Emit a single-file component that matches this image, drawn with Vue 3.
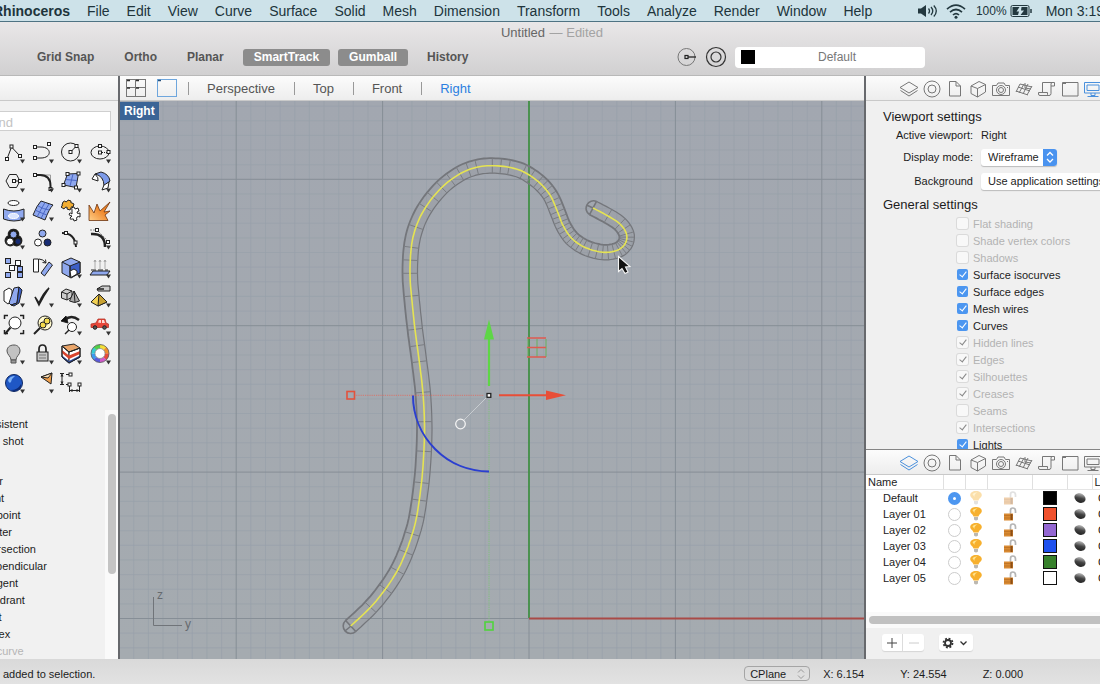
<template>
  <div class="desktop">
    <nav class="menubar" aria-label="Menu bar">
      <a v-for="m in menus" :key="m" href="#" :class="{ brand: m === 'Rhinoceros' }">{{ m }}</a>
      <div class="status-items">
        <svg width="22" height="16" viewBox="0 0 22 16" aria-hidden="true">
          <path d="M1 5.500h3L9 2v12L4 10.500H1z" fill="#23383f" />
          <path d="M11.500 5.500q2 2.500 0 5M14 4q3.500 4 0 8M16.800 2.500q5 5.500 0 11" fill="none" stroke="#23383f" stroke-width="1.300" />
        </svg>
        <svg class="wifi" width="20" height="16" viewBox="0 0 20 16" aria-hidden="true">
          <path d="M1 6.200q9-8 18 0M4 9.200q6-5.400 12 0M7 12q3-2.800 6 0" fill="none" stroke="#23383f" stroke-width="1.700" />
          <circle cx="10" cy="14.200" r="1.500" fill="#23383f" />
        </svg>
        <span class="percent">100%</span>
        <svg width="23" height="14" viewBox="0 0 23 14" aria-hidden="true">
          <rect x="1" y="1.500" width="18" height="11" rx="1.500" fill="none" stroke="#23383f" />
          <path d="M2.500 3h7l-3 4.500h2.500L8 11H2.500zM11.500 3h6v8h-7l3.500-4.500h-3z" fill="#23383f" />
          <path d="M21 5v4" stroke="#23383f" stroke-width="1.500" />
        </svg>
        <span class="clock">Mon 3:19</span>
      </div>
    </nav>

    <header class="titlebar">
      <h1>Untitled <span>— Edited</span></h1>
      <div class="toolbar">
        <button v-for="t in toggles" :key="t.name" type="button" :aria-pressed="t.on" @click="t.on = !t.on">
          {{ t.name }}
        </button>
        <div class="current-layer">
          <button type="button" class="round" aria-label="Record history">
            <svg width="20" height="20" viewBox="0 0 20 20">
              <circle cx="9.500" cy="10" r="8.500" fill="none" stroke="#777" />
              <path d="M11 10h8" stroke="#222" stroke-width="1.300" />
              <rect x="8" y="8.500" width="3" height="3" fill="none" stroke="#222" stroke-width="1.200" />
            </svg>
          </button>
          <button type="button" class="round" aria-label="Properties">
            <svg width="22" height="22" viewBox="0 0 22 22" fill="none" stroke="#333" stroke-width="1.200">
              <circle cx="11" cy="11" r="9.500" />
              <circle cx="11" cy="11" r="5" />
            </svg>
          </button>
          <button type="button" class="layer-button"><i></i><span>Default</span></button>
        </div>
      </div>
    </header>

    <main class="workspace">
      <aside class="sidebar">
        <div class="strip"></div>
        <div class="command">
          <input type="text" placeholder="Command" aria-label="Command" />
        </div>
        <div class="tools">
          <button v-for="(t, i) in tools" :key="i" type="button" :aria-label="t.name">
            <svg width="28" height="28" viewBox="0 0 28 28" fill="none" stroke="#222">
              <g v-html="t.art"></g>
              <path v-if="!t.single" d="M20 20.500h5l-2.500 4z" fill="#333" stroke="none" />
            </svg>
          </button>
        </div>
        <div class="snaps">
          <ul>
            <li v-for="s in snaps" :key="s" :class="{ last: s === 'One shot', off: s === 'On curve' }">{{ s }}</li>
          </ul>
          <div class="vscroll"><i></i></div>
        </div>
      </aside>

      <section class="center">
        <div class="strip tabs">
          <button type="button" aria-label="Four viewports">
            <svg width="20" height="18" viewBox="0 0 20 18" fill="none" stroke="#777">
              <rect x="0.500" y="0.500" width="19" height="17" />
              <path d="M9.500 0v18M0 8.500h20" />
              <path d="M1 1.500h3M10 1.500h3M1 9h3M10 9h3" stroke="#333" stroke-width="1.300" />
            </svg>
          </button>
          <button type="button" class="single" aria-label="Single viewport">
            <svg width="20" height="18" viewBox="0 0 20 18" fill="none" stroke="#6ea6dd">
              <rect x="0.500" y="0.500" width="19" height="17" />
              <path d="M1 1.500h3" stroke="#26517c" stroke-width="1.500" />
            </svg>
          </button>
          <button v-for="v in views" :key="v" type="button" class="view" :class="{ active: v === view }" @click="view = v">
            {{ v }}
          </button>
        </div>

        <div class="viewport">
          <svg viewBox="120 101 744 558" preserveAspectRatio="xMinYMin slice" fill="none">
            <defs>
              <linearGradient id="floor" x1="0" y1="0" x2="0" y2="1">
                <stop offset="0" stop-color="#a2a7b0" />
                <stop offset="1" stop-color="#a5abb0" />
              </linearGradient>
            </defs>
            <rect x="120" y="101" width="744" height="558" fill="url(#floor)" />
            <path :d="minorGrid" stroke="#98a0aa" stroke-width="0.700" />
            <path :d="majorGrid" stroke="#868e96" />

            <path d="M529 101V618" stroke="#439147" stroke-width="1.800" />
            <path d="M529 618.500H864" stroke="#a94a47" stroke-width="1.800" />

            <g stroke="#74767b">
              <path :d="pipe.fill" fill="#8a8d91" fill-opacity="0.200" stroke="none" />
              <path :d="pipe.left" stroke-width="1.200" />
              <path :d="pipe.right" stroke-width="1.800" />
              <path :d="pipe.rings" stroke="#7b7e83" />
              <path :d="pipe.caps" stroke-width="1.600" />
            </g>
            <path :d="pipe.middle" stroke="#e5e352" stroke-width="1.600" />

            <path d="M354 395.300H484" stroke="#dd6f65" stroke-width="0.900" stroke-dasharray="1.200 1" />
            <path d="M489 400V621" stroke="#7dc478" stroke-width="0.900" stroke-dasharray="1.200 1" />
            <path d="M487 397L464 420" stroke="#d2d5d8" stroke-width="0.800" />
            <circle cx="460.500" cy="424" r="4.800" stroke="#f3f3f3" stroke-width="1.300" />
            <path d="M413 395.500A76 76 0 0 0 489 471.500" stroke="#2b3fd0" stroke-width="2" />
            <rect x="347" y="391.500" width="7.500" height="7.500" stroke="#e3523c" stroke-width="1.600" />
            <rect x="485" y="622" width="8" height="8" stroke="#50d43d" stroke-width="1.600" />
            <path d="M499 395.300H548" stroke="#e84e37" stroke-width="2" />
            <path d="M546 390.500L566 395.300L546 400z" fill="#e84e37" />
            <path d="M489 386V338" stroke="#5ed646" stroke-width="2.200" />
            <path d="M484 339.500L489 319.500L494 339.500z" fill="#5ed646" />
            <rect x="487" y="393.500" width="3.800" height="3.800" fill="#fff" stroke="#222" stroke-width="1.300" />
            <path d="M528 339V357M537 339V357M546 339V357" stroke="#66b05d" />
            <path d="M527 338H546M527 347.500H546M527 357H546" stroke="#e05a4f" stroke-width="1.300" />

            <path d="M153.500 597V625.500H182" stroke="#707479" />
            <text x="157" y="599">z</text>
            <text x="185" y="628">y</text>

            <path d="M618.500 256.500V271.500L622 268.500L625 273.500L628 272L625.500 267L630 266.500z" fill="#111" stroke="#f5f5f5" stroke-width="1.100" />
          </svg>
          <span class="view-label">{{ view }}</span>
        </div>
      </section>

      <aside class="inspector">
        <div class="strip panel-tabs">
          <button v-for="(p, i) in panels" :key="p.name" type="button" :aria-label="p.name" :class="{ active: i === 8 }">
            <svg width="20" height="20" viewBox="0 0 20 20" fill="none" stroke="currentColor"><path :d="p.d" /></svg>
          </button>
        </div>
        <div class="settings">
          <h2>Viewport settings</h2>
          <div class="field"><span>Active viewport:</span><b>{{ view }}</b></div>
          <div class="field mode">
            <label for="mode">Display mode:</label>
            <div class="popup">
              <select id="mode"><option>Wireframe</option></select>
              <svg width="14" height="17" viewBox="0 0 14 17" fill="none" stroke="#fff" stroke-width="1.300">
                <path d="M4 6.500L7 3.500L10 6.500M4 10L7 13L10 10" />
              </svg>
            </div>
          </div>
          <div class="field mode">
            <label for="background">Background</label>
            <div class="popup wide">
              <select id="background"><option>Use application settings</option></select>
            </div>
          </div>
          <h2 class="general">General settings</h2>
          <label v-for="o in options" :key="o.name" class="option" :class="{ disabled: o.disabled }">
            <input v-model="o.on" type="checkbox" :disabled="o.disabled" />{{ o.name }}
          </label>
        </div>

        <div class="layers">
          <div class="strip panel-tabs">
            <button v-for="(p, i) in panels" :key="p.name" type="button" :aria-label="p.name" :class="{ active: i === 0 }">
              <svg width="20" height="20" viewBox="0 0 20 20" fill="none" stroke="currentColor"><path :d="p.d" /></svg>
            </button>
          </div>
          <div class="layer-list">
            <table>
              <colgroup>
                <col class="c-name" /><col class="c-radio" /><col class="c-bulb" /><col class="c-lock" />
                <col class="c-color" /><col class="c-ball" /><col />
              </colgroup>
              <thead>
                <tr><th>Name</th><th></th><th></th><th></th><th></th><th></th><th>L</th></tr>
              </thead>
              <tbody>
                <tr v-for="(l, i) in layers" :key="l.name">
                  <td class="name">{{ l.name }}</td>
                  <td><input v-model="current" type="radio" name="layer" :value="l.name" :aria-label="l.name" /></td>
                  <td>
                    <svg :class="{ faint: i === 0 }" width="14" height="16" viewBox="0 0 14 16">
                      <path d="M7 1C3.500 1 1.200 2.800 1.200 5C1.200 7.500 4 8 4.500 10.500H9.500C10 8 12.800 7.500 12.800 5C12.800 2.800 10.500 1 7 1z" fill="#f7b02e" />
                      <path d="M3.500 4.200Q5 2 8.500 2.500Q5 4 5.500 7Z" fill="#ffe38d" />
                      <path d="M5 11h4v2.500q-2 2-4 0z" fill="#bcb8b0" />
                    </svg>
                  </td>
                  <td>
                    <svg :class="{ faint: i === 0 }" width="16" height="16" viewBox="0 0 16 16">
                      <path d="M8.500 9V4.500Q8.500 2 10.800 2Q13.500 2 13.500 5V7" fill="none" stroke="#b5b5b5" stroke-width="1.700" />
                      <rect x="2" y="7.500" width="9" height="7" fill="#d98a32" />
                      <path d="M2 9.500h9M2 12h9" stroke="#b86d22" stroke-width="0.700" />
                      <path d="M9.500 8v6" stroke="#8d4f16" stroke-width="2" />
                    </svg>
                  </td>
                  <td>
                    <svg width="14" height="14" viewBox="0 0 14 14">
                      <rect x="0.500" y="0.500" width="13" height="13" :fill="l.color" stroke="#111" />
                    </svg>
                  </td>
                  <td>
                    <svg width="12" height="14" viewBox="0 0 12 14">
                      <defs>
                        <linearGradient :id="'ball' + i" x1="0.200" y1="0" x2="0.600" y2="1">
                          <stop offset="0" stop-color="#ccc" />
                          <stop offset="0.550" stop-color="#444" />
                          <stop offset="1" stop-color="#222" />
                        </linearGradient>
                      </defs>
                      <ellipse cx="6" cy="7" rx="5.800" ry="4.600" :fill="`url(#ball${i})`" transform="rotate(30 6 7)" />
                    </svg>
                  </td>
                  <td class="line">Continuous</td>
                </tr>
              </tbody>
            </table>
          </div>
          <div class="hscroll"><i></i></div>
          <div class="layer-actions">
            <div class="group">
              <button type="button" aria-label="Add layer">
                <svg width="12" height="12" viewBox="0 0 12 12"><path d="M1 6h10M6 1v10" stroke="#444" /></svg>
              </button>
              <button type="button" aria-label="Remove layer" disabled>
                <svg width="12" height="12" viewBox="0 0 12 12"><path d="M1 6h10" stroke="#ccc" /></svg>
              </button>
            </div>
            <button type="button" class="gear" aria-label="Layer actions">
              <svg width="28" height="12" viewBox="0 0 28 12" fill="none" stroke="#333">
                <circle cx="6" cy="6" r="3" stroke-width="1.800" />
                <circle cx="6" cy="6" r="4.500" stroke-width="1.800" stroke-dasharray="1.900 1.634" />
                <path d="M18.500 4.500L21.500 7.500L24.500 4.500" stroke-width="1.300" />
              </svg>
            </button>
          </div>
        </div>
      </aside>
    </main>

    <footer class="statusbar">
      <span class="message">added to selection.</span>
      <div class="coords">
        <div class="plane">
          <select aria-label="Coordinate system"><option>CPlane</option></select>
          <svg width="10" height="12" viewBox="0 0 10 12" fill="none" stroke="#999">
            <path d="M2 4.500L5 1.500L8 4.500M2 7.500L5 10.500L8 7.500" />
          </svg>
        </div>
        <span>X: 6.154</span><span>Y: 24.554</span><span>Z: 0.000</span>
      </div>
    </footer>
  </div>
</template>

<script setup>
import { ref, reactive } from 'vue'

const menus = ['Rhinoceros', 'File', 'Edit', 'View', 'Curve', 'Surface', 'Solid', 'Mesh', 'Dimension', 'Transform', 'Tools', 'Analyze', 'Render', 'Window', 'Help']

const toggles = reactive([
  { name: 'Grid Snap', on: false },
  { name: 'Ortho', on: false },
  { name: 'Planar', on: false },
  { name: 'SmartTrack', on: true },
  { name: 'Gumball', on: true },
  { name: 'History', on: false },
])

const views = ['Perspective', 'Top', 'Front', 'Right']
const view = ref('Right')

const snaps = ['Persistent', 'One shot', 'End', 'Near', 'Point', 'Midpoint', 'Center', 'Intersection', 'Perpendicular', 'Tangent', 'Quadrant', 'Knot', 'Vertex', 'On curve']

const options = reactive([
  { name: 'Flat shading', on: false, disabled: true },
  { name: 'Shade vertex colors', on: false, disabled: true },
  { name: 'Shadows', on: false, disabled: true },
  { name: 'Surface isocurves', on: true },
  { name: 'Surface edges', on: true },
  { name: 'Mesh wires', on: true },
  { name: 'Curves', on: true },
  { name: 'Hidden lines', on: true, disabled: true },
  { name: 'Edges', on: true, disabled: true },
  { name: 'Silhouettes', on: true, disabled: true },
  { name: 'Creases', on: true, disabled: true },
  { name: 'Seams', on: false, disabled: true },
  { name: 'Intersections', on: true, disabled: true },
  { name: 'Lights', on: true },
])

const current = ref('Default')
const layers = [
  { name: 'Default', color: '#000' },
  { name: 'Layer 01', color: '#f0512d' },
  { name: 'Layer 02', color: '#9467d2' },
  { name: 'Layer 03', color: '#1f51ee' },
  { name: 'Layer 04', color: '#37812b' },
  { name: 'Layer 05', color: '#fff' },
]

const panels = [
  { name: 'Layers', d: 'M1 8.500L10 3L19 8.500L10 14zM1.500 11.500L10 17L18.500 11.500' },
  { name: 'Properties', d: 'M2 10a8 8 0 1 0 16 0a8 8 0 1 0-16 0M6 10a4 4 0 1 0 8 0a4 4 0 1 0-8 0' },
  { name: 'Notes', d: 'M4.500 2.500H11L15.500 7V17H4.500zM11 2.500V7H15.500' },
  { name: 'Box', d: 'M3 7L11 2.500L17.500 5.500V13L9.500 18L3 14.500zM3 7L9.500 9.500V18M9.500 9.500L17.500 5.500' },
  { name: 'Camera', d: 'M1.500 6.500H5.500L7 4H13L14.500 6.500H18.500V16.500H1.500zM5.500 11a4.500 4.500 0 1 0 9 0a4.500 4.500 0 1 0-9 0M7.500 11a2.500 2.500 0 1 0 5 0a2.500 2.500 0 1 0-5 0M16 8.500h1' },
  { name: 'Grid', d: 'M6 5L18 8M4 8L16 12M2 12L14 16M6 5L2 13M10 5L5 14M14 5L9 15M18 7L13 16M11 4V9L17 10' },
  { name: 'Script', d: 'M5.500 14V3.500H17.500V7H14V14.500Q14 16.500 12 16.500H3Q1.500 16.500 1.500 15V13.500H10.500V15.500Q11 17 12.500 16.500M14 7V5Q14 3.500 15.500 3.500' },
  { name: 'Viewports', d: 'M2.500 3.500H18V17H2.500zM3 4.500H6' },
  { name: 'Display', d: 'M1.500 3.500H18.500V14H1.500zM4 6H16V11.500H4zM8 14V16.500H12V14M4.500 17.500H15.500' },
]

const sq = (x, y) => `<rect x="${x - 1.5}" y="${y - 1.5}" width="3" height="3" fill="#fff" stroke="#222"/>`
const box = (x, y, s, fill) => `<rect x="${x}" y="${y}" width="${s}" height="${s}" fill="${fill}"/>`

const tools = [
  { name: 'Polyline', art: '<path d="M7 20L11.500 8L20 17"/>' + sq(7, 20) + sq(11.5, 7.5) + sq(20, 17) },
  { name: 'Curve', art: '<path d="M6 8H12C23 8 23 19 12 19H6"/>' + sq(6, 8) + sq(6, 19) + sq(20, 5) },
  { name: 'Circle', art: '<circle cx="13.500" cy="13" r="9"/><path d="M13.500 13L19 7.500"/>' + sq(13.5, 13) + sq(19.5, 7) },
  { name: 'Ellipse', art: '<ellipse cx="14" cy="13.500" rx="9" ry="6.500"/><path d="M14 13.500H22" stroke-dasharray="1 1"/>' + sq(14, 13.5) + sq(14, 7) + sq(22.5, 13) },
  { name: 'Polygon', art: '<path d="M6 13L9.500 6.500H16.500L20 13L16.500 19.500H9.500z"/><path d="M14 13h6"/>' + sq(14, 13) + sq(20, 13) },
  { name: 'Fillet curves', art: '<path d="M6 7H21.500V22" stroke="#999"/><path d="M6 7H11Q21.500 7 21.500 18V21" stroke-width="2"/>' + sq(6, 7) + sq(21.5, 21) },
  { name: 'Surface from points', art: '<path d="M10.500 6L21.500 5.500L19 19.500L6.500 17z" fill="#8fa8ee"/><path d="M16 6L13 18M8.500 11.500L20 12.500" stroke="#4a66c4"/>' + sq(10.5, 6) + sq(21.5, 5.5) + sq(19, 19.5) + sq(6.5, 17) },
  { name: 'Loft', art: '<path d="M9 6Q18 8 18 18L24 13Q23 6 15 4z" fill="#7d9bea"/><path d="M9 6L6 11L12 13Q13 10 9 6zM18 17L23 14L22 20L16 22z" fill="#fff"/>' },
  { name: 'Revolve', art: '<ellipse cx="13.500" cy="6" rx="5.500" ry="2.500" fill="#fff"/><path d="M3.500 12Q14 16 24 12V22Q14 26 3.500 22z" fill="#8fa8ee"/><ellipse cx="13.500" cy="19" rx="5" ry="2.500" fill="#dbe5ff" stroke="#fff"/>' },
  { name: 'Surface from network', art: '<path d="M12 4L24 8Q20 12 16 23L4 18Q8 8 12 4z" fill="#8fa8ee"/><path d="M16 5.500Q12 12 8 20M20 7Q16 13 12 21.500M9 9Q14 12 20 13M6 13Q12 16 18 18" stroke="#4a66c4"/>' },
  { name: 'Join', single: true, art: '<path d="M6 5q2-2 3 0q2-1 2-2l3 1q-1 2 1 2l2 1-1 3q-2-1-2 1l-1 2-3-1q1-2-1-2q-2 1-2 2l-3-2q2-1 1-2z" fill="#f2ae32"/><path d="M15 13q-1-2 1-3q2 0 2 2l3-1 1 3q-2 0-2 2q1 1 3 0l0 4q-2-1-3 0q-1 2 0 3l-3 1q0-3-2-2q-2 1-2-1l2-2q-3 0-3-2q1-2 3 0z" fill="#fff"/>' },
  { name: 'Explode', single: true, art: '<defs><linearGradient id="burst" x1="0" y1="1" x2="1" y2="0"><stop offset="0" stop-color="#ffd089"/><stop offset=".6" stop-color="#ee8427"/></linearGradient></defs><path d="M3 23.500V8L8 16L11 7L14 14L24 5L18 15L24 14L19 18L22 23.500z" fill="url(#burst)" stroke="#6b3411" stroke-width="0.800"/>' },
  { name: 'Boolean union', art: '<path d="M13.500 4.500a5 5 0 0 1 5 6.500a5 5 0 1 1-5 8.500a5 5 0 1 1-5-8.500a5 5 0 0 1 5-6.500z" fill="#111" stroke-width="1.500"/><circle cx="13.500" cy="9.500" r="3.500" fill="#8fa8ee"/><circle cx="10" cy="16.500" r="3.500" fill="#fff"/><circle cx="18" cy="16.500" r="3" fill="#172c74"/>' },
  { name: 'Group', single: true, art: '<circle cx="13.500" cy="8.500" r="3.500" fill="#8fa8ee"/><circle cx="9" cy="17.500" r="3.500" fill="#fff"/><circle cx="18.500" cy="17.500" r="3.500" fill="#172c74"/>' },
  { name: 'Edit points', single: true, art: '<path d="M5 8Q18 8 19 22" stroke-width="2"/>' + sq(9, 8) + sq(18.5, 17.5) },
  { name: 'Control points', art: '<path d="M5 9Q19 8 19 22" stroke-width="2.500"/><path d="M4 5H11L21 15" stroke="#888" stroke-dasharray="2 1"/>' + sq(11, 5) + sq(22, 17) },
  { name: 'Array', single: true, art: box(5.5, 4.5, 5, '#8fa8ee') + box(15.5, 6.5, 5, '#fff') + box(9.5, 11.5, 5, '#fff') + box(5.5, 18.5, 5, '#8fa8ee') + box(17.5, 12.5, 5, '#8fa8ee') + box(17.5, 18.5, 5, '#8fa8ee') },
  { name: 'Orient', single: true, art: '<path d="M4.500 5H9.500V18H4.500z" fill="#fff"/><path d="M12 19L20 8L23.500 11L15.500 22z" fill="#8fa8ee"/><path d="M10 5Q14 5 17 9M17 9l-3.500-.5M17 9l-.5-3.500"/>' },
  { name: 'Box', art: '<path d="M5 8L14 4L23 8V19L14 24L5 19z" fill="#8fa8ee"/><path d="M13 12L23 8V19L13 23z" fill="#3d5fc6"/><path d="M5 8L13 12V23"/><path d="M13 17L17 15L20 17V20L14 23.500z" fill="#fff"/>' },
  { name: 'Extrude', art: '<path d="M7 17H24L21 21H4z" fill="#8fa8ee"/><path d="M9 15V8M14 15V8M19 15V8" stroke="#aaa"/><path d="M8 8L9 6L10 8M13 8L14 6L15 8M18 8L19 6L20 8" stroke="#999"/><path d="M5 16H22" stroke-dasharray="5 2"/>' },
  { name: 'Unroll', art: '<path d="M4 8L9 5L12 7V18L8 21L4 18z" fill="#fff"/><path d="M14 5L19 4L17 20L11 22L9 20z" fill="#8fa8ee"/><path d="M19 4L22 7L19 20L14 23L11 22L17 20z" fill="#3d5fc6"/>' },
  { name: 'Check', art: '<path d="M6 14L10 20Q14 10 20 5Q15 12 10 22z" fill="#111" stroke-width="1.500"/>' },
  { name: 'Solids', art: '<path d="M4.500 9L9 6L15 8V14L10 17L4.500 15z" fill="#ccc"/><path d="M4.500 9L10 11L15 8M10 11V17"/><path d="M17 8L22.500 18Q18 21 12.500 18z" fill="#aaa"/><path d="M17 8L18 19.500"/>' },
  { name: 'Extract', art: '<path d="M13 11L21 19L12 23L5 19z" fill="#f2d154"/><path d="M13 11L12 23L21 19z" fill="#c9a232"/><path d="M11 6L16 3H24V8H18L12 8z" fill="#ccc"/><path d="M11 6h7" stroke-width="1.500"/>' },
  { name: 'Zoom extents', single: true, art: '<circle cx="15" cy="12" r="6" fill="#fff"/><path d="M10.500 16.500L5 23" stroke-width="2"/><path d="M4.500 8V4.500H8M20 4.500H23.500V8M23.500 19V22.500H20M4.500 19V22.500H8" stroke-width="1.500"/>' },
  { name: 'Zoom selected', single: true, art: '<circle cx="16" cy="12" r="7" fill="#fff9cc"/><circle cx="14" cy="14" r="3" fill="#f4dc4d"/><circle cx="18" cy="10" r="3" fill="#f4dc4d"/><path d="M11 17L5 23" stroke-width="2"/>' },
  { name: 'Undo view change', art: '<path d="M22 9Q14 3 8 9" stroke-width="2.500"/><path d="M4 10L9 5L11 12z" fill="#111"/><circle cx="15" cy="16" r="4.500" fill="#fff"/><path d="M12 19L8 23" stroke-width="1.500"/>' },
  { name: 'Move', art: '<path d="M5 13L10 12L12 8H19L20 12L22.500 13V16.500H5z" fill="#e8483a" stroke="#b5352a" stroke-width=".8"/><path d="M12 11.500L13 9H15V12zM16 9H18L19 12H16z" fill="#ffd9d4" stroke="none"/><circle cx="9" cy="16.500" r="1.800" fill="#555"/><circle cx="18.500" cy="16.500" r="1.800" fill="#555"/>' },
  { name: 'Hide', art: '<path d="M14 5C9 5 7 8 7 11C7 15 11 16 11 20H16C16 16 20 15 20 11C20 8 18 5 14 5z" fill="#c2c2c2" stroke="#555"/><path d="M11 20h5v3h-5z" fill="#999" stroke="#555"/>' },
  { name: 'Lock', art: '<path d="M10 13V9Q10 5 13.500 5Q17 5 17 9V13" stroke-width="1.700"/><rect x="8" y="12" width="11" height="9" fill="#c8c8c8"/><path d="M10 15h7M10 18h7" stroke="#777"/>' },
  { name: 'Layers', art: '<path d="M5 6L12 12V23L5 17z" fill="#fff"/><path d="M12 12L23 8V17L12 23z" fill="#fff"/><path d="M5 6L17 4L23 8L12 12z" fill="#e9a56a"/><path d="M5 10L12 15.500L23 11V14L12 19L5 13z" fill="#d9442f" stroke="none"/><path d="M5 15.500L12 21L23 15.500V17.500L12 23.500L5 17.500z" fill="#2b4690" stroke="none"/><path d="M5 6L12 12L23 8V17L12 23L5 17z"/>' },
  {
    name: 'Color wheel',
    art: ['#f6df36', '#f08d2d', '#e84b3c', '#d05cc9', '#5b58dc', '#3b9af0', '#35cbd4', '#52cf47']
      .map((c, i) => `<path d="M14 6.500A7 7 0 0 1 19.100 8.600" stroke="${c}" stroke-width="4" transform="rotate(${i * 45} 14 13.500)"/>`)
      .join('') + '<circle cx="14" cy="13.500" r="9" stroke="#555" stroke-width=".8"/><circle cx="14" cy="13.500" r="5" fill="#fff" stroke="#777" stroke-width=".7"/>',
  },
  { name: 'Render', art: '<circle cx="14" cy="14" r="8.500" fill="#1f57c5" stroke="#0e2760"/><path d="M8 11Q10 7 15 7Q12 9 11 13Q9 15 8 11z" fill="#7db2f8" stroke="none"/><path d="M11 21Q18 21 21 15Q22 22 14 22z" fill="#0d2a75" stroke="none"/>' },
  { name: 'Camera', art: '<path d="M12 8L23 4L22 15z" fill="#f0a04c"/><path d="M12 8L23 4L19 9z" fill="#ffe2b8"/>' },
  { name: 'Dimension', single: true, art: '<path d="M5 5V15M3 4.500H7M3 15.500H7M9 5.500H13M12.500 23V15M22.500 23V15M9 15.500H11M13 21.500H22"/><path d="M5 4.500l-1.500 3h3zM5 15.500l-1.500-3h3zM12.500 21.500l3-1.500v3zM22.500 21.500l-3-1.500v3z" fill="#222" stroke="none"/>' + sq(13.5, 5.5) + sq(12.5, 15.5) + sq(22.5, 15.5) },
]

// construction plane grid: origin on the world axes, major line every 10 units
const origin = { x: 529, y: 618.5 }
const step = 14.64
const gridPath = (major) => {
  let d = ''
  for (let i = -28; i <= 22; i++) {
    if ((i % 10 === 0) === major) d += `M${(origin.x + i * step).toFixed(1)} 101V659`
  }
  for (let j = -35; j <= 2; j++) {
    if ((j % 10 === 0) === major) d += `M120 ${(origin.y + j * step).toFixed(1)}H864`
  }
  return d
}
const minorGrid = gridPath(false)
const majorGrid = gridPath(true)

// rail curve: x, y, number of isocurves up to the next point
const rail = [
  [593, 208, 1], [608, 216, 1], [620, 224, 2], [626.5, 234, 3], [625.5, 243, 3], [619, 249.5, 2],
  [608, 252.3, 2], [597, 251.3, 2], [583.5, 246.7, 3], [571.7, 238.3, 3], [563.3, 226, 3],
  [557.5, 211.7, 3], [550, 195, 3], [538.3, 181.7, 2], [523.3, 171.7, 1], [509, 167.3, 2],
  [492.3, 165.7, 1], [476.7, 167.3, 2], [460, 173.8, 2], [441.7, 187.500, 2], [425.5, 207.5, 1],
  [416, 227, 1], [411.300, 247.3, 2], [410, 273.3, 1], [411.5, 296, 1], [415, 329.3, 2],
  [419.3, 361.7, 1], [422.9, 392.3, 1], [424.4, 421.7, 1], [423.9, 451.3, 1], [421.5, 482.7, 2],
  [416.8, 516, 1], [412.2, 534, 1], [405.8, 552.3, 1], [397.3, 570.7, 1], [385.5, 589, 1],
  [370.5, 607.3, 0], [350.7, 626, 0],
]
const radius = 7.5

const buildPipe = () => {
  const mid = []
  const left = []
  const right = []
  let rings = ''
  const at = (s, t) => {
    const p = [s - 1, s, s + 1, s + 2].map((k) => rail[Math.max(0, Math.min(rail.length - 1, k))])
    const axis = (a) => {
      const [p0, p1, p2, p3] = p.map((q) => q[a])
      const c1 = p2 - p0
      const c2 = 2 * p0 - 5 * p1 + 4 * p2 - p3
      const c3 = 3 * p1 - p0 - 3 * p2 + p3
      return [(2 * p1 + c1 * t + c2 * t * t + c3 * t * t * t) / 2, (c1 + 2 * c2 * t + 3 * c3 * t * t) / 2]
    }
    const [x, dx] = axis(0)
    const [y, dy] = axis(1)
    const len = Math.hypot(dx, dy)
    const nx = (-dy / len) * radius
    const ny = (dx / len) * radius
    const f = (a, b) => `${a.toFixed(1)} ${b.toFixed(1)}`
    return { m: f(x, y), l: f(x + nx, y + ny), r: f(x - nx, y - ny) }
  }
  for (let s = 0; s < rail.length - 1; s++) {
    for (let i = 0; i < 6; i++) {
      const q = at(s, i / 6)
      mid.push(q.m)
      left.push(q.l)
      right.push(q.r)
    }
    for (let n = 1; n <= rail[s][2]; n++) {
      const q = at(s, n / rail[s][2])
      rings += `M${q.l}L${q.r}`
    }
  }
  const end = at(rail.length - 2, 1)
  mid.push(end.m)
  left.push(end.l)
  right.push(end.r)
  return {
    middle: 'M' + mid.join('L'),
    left: 'M' + right.join('L'),
    right: 'M' + left.join('L'),
    fill: 'M' + left.join('L') + 'L' + [...right].reverse().join('L') + 'z',
    rings,
    caps: `M${left[0]}A7.500 7.500 0 0 1 ${right[0]}M${left[0]}L${right[0]}M586.500 205L593 208M${end.l}A7.500 7.500 0 0 0 ${end.r}M${end.l}L${end.r}M345 631L351 626`,
  }
}
const pipe = buildPipe()
</script>

<style>
html,
body {
  margin: 0;
  overflow: hidden;
}
</style>

<style scoped>
.desktop {
  height: 100vh;
  display: flex;
  flex-direction: column;
  overflow: hidden;
  font-family: "Liberation Sans", Arial, sans-serif;
  font-size: 11px;
  color: #1c1c1c;
  background: #f0f0f0;
}

button {
  font: inherit;
  color: inherit;
  background: none;
  border: 0;
  padding: 0;
}

svg {
  display: block;
  flex: none;
}

.menubar {
  display: flex;
  align-items: center;
  gap: 17px;
  height: 21px;
  flex: none;
  padding-left: 17px;
  background: #cde2e9;
  border-bottom: 1px solid #4f7383;
  font-size: 14px;
  white-space: nowrap;
}

.menubar a {
  color: #20343b;
  text-decoration: none;
}

.menubar .brand {
  font-weight: 700;
  margin-left: -24px;
}

.status-items {
  display: flex;
  align-items: center;
  margin-left: auto;
  margin-right: -4px;
  color: #20343b;
}

.wifi {
  margin: 0 10px 0 7px;
}

.percent {
  font-size: 12px;
  margin-right: 3px;
}

.clock {
  margin-left: 13px;
}

.titlebar {
  flex: none;
  height: 54px;
  background: linear-gradient(#e9e7e8, #d1d0d1);
  border-bottom: 1px solid #b9b9b9;
  box-sizing: border-box;
}

.titlebar h1 {
  margin: 0;
  height: 21px;
  line-height: 22px;
  padding-left: 4px;
  font-size: 13px;
  font-weight: 400;
  text-align: center;
  color: #666;
}

.titlebar h1 span {
  margin-left: 1px;
  color: #a3a3a3;
}

.toolbar {
  display: flex;
  align-items: center;
  gap: 8px;
  height: 28px;
  padding: 0 175px 0 26px;
  font-size: 12px;
  font-weight: 700;
  color: #555;
}

.toolbar > button {
  height: 17px;
  padding: 0 11px;
  border-radius: 3px;
}

.toolbar > button[aria-pressed="true"] {
  background: #8c8c8c;
  color: #fff;
}

.current-layer {
  display: flex;
  align-items: center;
  gap: 8px;
  margin-left: auto;
}

.layer-button {
  display: flex;
  align-items: center;
  width: 190px;
  height: 21px;
  padding: 0 6px;
  box-sizing: border-box;
  border-radius: 4px;
  background: #fff;
  font-weight: 400;
  color: #777;
}

.layer-button i {
  width: 14px;
  height: 14px;
  background: #000;
}

.layer-button span {
  flex: 1;
}

.workspace {
  flex: 1;
  min-height: 0;
  display: grid;
  grid-template-columns: 118px minmax(0, 1fr) 234px;
}

.strip {
  flex: none;
  height: 24px;
  background: linear-gradient(#fcfcfc, #ededed);
  border-bottom: 1px solid #c9c9c9;
}

.sidebar {
  display: flex;
  flex-direction: column;
  min-height: 0;
  overflow: hidden;
  background: #f1f1f1;
}

.command {
  padding: 10px 7px 8px 0;
}

.command input {
  display: block;
  width: 160px;
  height: 20px;
  margin-left: -49px;
  padding: 2px 0 0 1px;
  box-sizing: border-box;
  border: 1px solid #cfcfcf;
  background: #fff;
  font: 13px "Liberation Sans", Arial, sans-serif;
}

.command input::placeholder {
  color: #c3c3c3;
}

.tools {
  display: grid;
  grid-template-columns: repeat(4, 1fr);
  grid-template-rows: repeat(9, 1fr);
  height: 258px;
  margin-right: 4px;
  flex: none;
}

.snaps {
  flex: 1;
  min-height: 0;
  display: flex;
  margin-top: 13px;
  overflow: hidden;
}

.snaps ul {
  flex: 1;
  margin: 0;
  padding: 6px 0 0;
  list-style: none;
  line-height: 17px;
  white-space: nowrap;
}

.snaps li {
  margin-left: -21px;
}

.snaps .last {
  margin-bottom: 6px;
}

.snaps .off {
  color: #b5b5b5;
}

.vscroll {
  width: 13px;
  background: #fafafa;
}

.vscroll i {
  display: block;
  width: 8px;
  height: 160px;
  margin: 4px auto 0 3px;
  border-radius: 4px;
  background: #c4c4c4;
}

.center {
  display: flex;
  flex-direction: column;
  min-height: 0;
  border: solid #67696d;
  border-width: 0 2px;
}

.tabs {
  display: flex;
  align-items: center;
  padding-left: 6px;
  font-size: 13px;
  color: #555;
}

.tabs .single {
  margin-left: 11px;
  margin-right: 11px;
}

.tabs .view {
  display: flex;
  align-items: center;
  padding-right: 19px;
}

.tabs .view::before {
  content: "";
  width: 1px;
  height: 13px;
  margin-right: 18px;
  background: #999;
}

.tabs .active {
  color: #2c7fe0;
}

.viewport {
  position: relative;
  flex: 1;
  min-height: 0;
  overflow: hidden;
  background: #a4a9b0;
}

.viewport svg {
  width: 100%;
  height: 100%;
}

.viewport text {
  font-size: 12px;
  fill: #666a6f;
}

.view-label {
  position: absolute;
  top: 1px;
  left: 0;
  padding: 0 4px;
  font-size: 12px;
  font-weight: 700;
  line-height: 18px;
  color: #fff;
  background: #3b6496;
}

.inspector {
  display: flex;
  flex-direction: column;
  min-height: 0;
  overflow: hidden;
}

.panel-tabs {
  display: flex;
  align-items: center;
  gap: 3px;
  height: 22px;
  padding: 2px 0 0 33px;
  overflow: hidden;
  color: #777;
}

.panel-tabs .active {
  color: #4a90dc;
}

.settings {
  flex: 1;
  min-height: 0;
  overflow: hidden;
  padding: 7px 0 0 17px;
}

.settings h2 {
  margin: 0;
  font-size: 13px;
  font-weight: 400;
  line-height: 18px;
}

.settings .general {
  margin: 3px 0 1px;
}

.field {
  display: flex;
  align-items: center;
  gap: 8px;
  height: 18px;
}

.field > :first-child {
  flex: none;
  width: 90px;
  text-align: right;
}

.field b {
  font-weight: 400;
}

.field.mode {
  height: 24px;
}

.field + .mode {
  margin-top: 1px;
}

.mode + .mode {
  margin-top: 0;
}

.popup {
  position: relative;
  flex: none;
  width: 76px;
  height: 17px;
  border-radius: 3px;
  overflow: hidden;
  background: #fff;
  box-shadow: 0 1px 1px #bbb;
}

.wide {
  width: 160px;
}

.popup select,
.plane select {
  appearance: none;
  width: 100%;
  height: 100%;
  padding: 0 0 0 7px;
  border: 0;
  background: none;
  font: inherit;
  color: inherit;
}

.popup svg {
  position: absolute;
  top: 0;
  right: 0;
  background: #4a93ef;
  pointer-events: none;
}

.option {
  display: flex;
  align-items: center;
  gap: 5px;
  height: 17px;
  padding-left: 74px;
}

.disabled {
  color: #b3b3b3;
}

.option input {
  appearance: none;
  width: 11px;
  height: 11px;
  margin: 0;
  border-radius: 2px;
  background: #f8f8f8;
  box-shadow: 0 0 0 1px #dadada;
}

.option input:checked::after {
  content: "";
  display: block;
  width: 3px;
  height: 6px;
  margin: 1px 0 0 4px;
  border: solid #888;
  border-width: 0 1px 1px 0;
  transform: rotate(38deg);
}

.option input:checked:enabled {
  background: #4c96f0;
  box-shadow: none;
}

.option input:checked:enabled::after {
  border-color: #fff;
}

.layers {
  flex: none;
  border-top: 1px solid #858585;
}

.layer-list {
  height: 137px;
  overflow: hidden;
  background: #fff;
}

.layer-list table {
  width: 290px;
  table-layout: fixed;
  border-collapse: collapse;
  color: #222;
}

.c-name {
  width: 77px;
}

.c-radio,
.c-bulb {
  width: 22px;
}

.c-lock {
  width: 45px;
}

.c-color {
  width: 35px;
}

.c-ball {
  width: 25px;
}

.layer-list th {
  height: 14px;
  padding: 0 2px;
  font-weight: 400;
  text-align: left;
  border-right: 1px solid #e0e0e0;
  border-bottom: 1px solid #e5e5e5;
}

.layer-list td {
  height: 16px;
  padding: 0;
}

.layer-list td svg {
  margin: 0 auto;
}

.layer-list .name {
  padding-left: 17px;
}

.layer-list .line {
  padding-left: 6px;
}

.layer-list input {
  appearance: none;
  display: block;
  width: 13px;
  height: 13px;
  margin: 0 auto;
  border: 1px solid #ccc;
  border-radius: 50%;
  background: #fff;
}

.layer-list input:checked {
  border: 5px solid #4c96f0;
}

.faint {
  opacity: 0.4;
}

.hscroll {
  padding: 4px 0 4px 3px;
  background: #fafafa;
  overflow: hidden;
}

.hscroll i {
  display: block;
  width: 260px;
  height: 8px;
  border-radius: 4px;
  background: #c1c1c1;
}

.layer-actions {
  display: flex;
  gap: 15px;
  padding: 6px 16px 8px;
  background: #f0f0f0;
}

.group {
  display: flex;
}

.layer-actions button {
  display: flex;
  align-items: center;
  justify-content: center;
  width: 21px;
  height: 17px;
  background: #fff;
  box-shadow: 0 1px 1px #d5d5d5;
}

.group button:first-child {
  border-right: 1px solid #ddd;
  border-radius: 3px 0 0 3px;
}

.group button:last-child {
  border-radius: 0 3px 3px 0;
}

.layer-actions .gear {
  width: 34px;
  border-radius: 3px;
}

.statusbar {
  flex: none;
  display: flex;
  align-items: center;
  height: 25px;
  padding-top: 4px;
  box-sizing: border-box;
  background: linear-gradient(#d9d9d9, #e2e2e2);
  white-space: nowrap;
}

.message {
  margin-left: 3px;
}

.coords {
  display: flex;
  align-items: center;
  gap: 36px;
  margin-left: auto;
  padding-right: 77px;
}

.plane {
  position: relative;
  width: 66px;
  height: 15px;
  margin-right: -23px;
  box-sizing: border-box;
  border: 1px solid #a5a5a5;
  border-radius: 4px;
}

.plane select {
  padding-left: 5px;
}

.plane svg {
  position: absolute;
  top: 1px;
  right: 3px;
  pointer-events: none;
}
</style>
